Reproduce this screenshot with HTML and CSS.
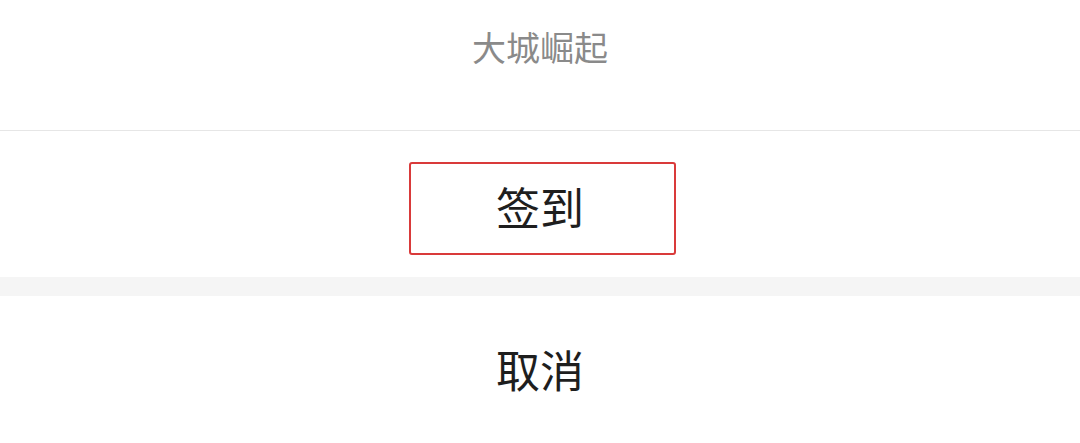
FILE: index.html
```html
<!DOCTYPE html>
<html lang="zh-CN">
<head>
<meta charset="utf-8">
<link rel="stylesheet" href="styles.css">
</head>
<body>
<div class="sheet">
  <div class="title">大城崛起</div>
  <div class="action-row">
    <div class="sign-btn">签到</div>
  </div>
  <div class="gap"></div>
  <div class="cancel">取消</div>
</div>
</body>
</html>
```

FILE: styles.css
```css
html, body {
  margin: 0;
  padding: 0;
  background: #ffffff;
}
body {
  font-family: "Noto Sans CJK SC", "Noto Sans", sans-serif;
}
.sheet {
  width: 1080px;
  height: 443px;
  overflow: hidden;
  display: flex;
  flex-direction: column;
}
.title {
  padding-top: 30px;
  box-sizing: border-box;
  height: 131px;
  text-align: center;
  font-size: 34px;
  line-height: 34px;
  color: #8a8a8a;
  border-bottom: 1px solid #e6e6e6;
}
.action-row {
  height: 146px;
  padding-top: 31px;
  padding-left: 4px;
  box-sizing: border-box;
  display: flex;
  justify-content: center;
}
.sign-btn {
  width: 267px;
  height: 93px;
  box-sizing: border-box;
  border: 2px solid #d93a3a;
  border-radius: 3px;
  display: flex;
  align-items: center;
  justify-content: center;
  padding-bottom: 6px;
  padding-right: 4px;
  font-size: 44px;
  color: #1e1e1e;
}
.gap {
  height: 19px;
  background: #f5f5f5;
}
.cancel {
  flex: 1;
  padding-top: 51px;
  text-align: center;
  font-size: 44px;
  line-height: 44px;
  color: #1e1e1e;
}
```
